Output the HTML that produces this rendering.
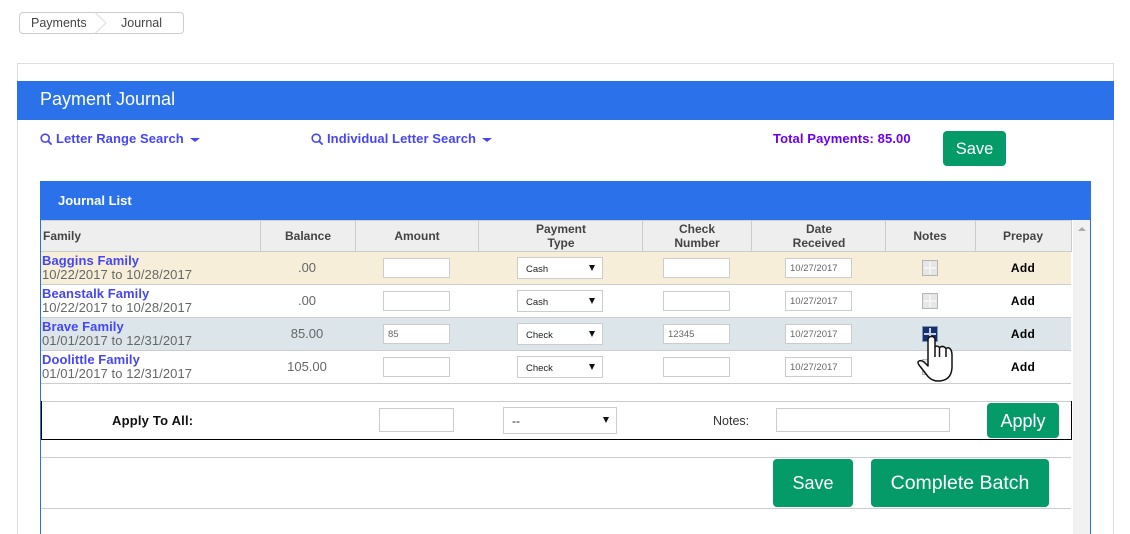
<!DOCTYPE html>
<html><head><meta charset="utf-8"><style>
html,body{margin:0;padding:0;background:#fff;width:1130px;height:534px;overflow:hidden}
body{position:relative;font-family:"Liberation Sans",sans-serif}
.a,.t{position:absolute}
.t{white-space:nowrap;line-height:16px}
.c{transform:translateX(-50%);text-align:center}
.h{font-size:12px;font-weight:bold;color:#444;line-height:14px}
.n{font-size:13px;font-weight:bold;color:#4646f5;letter-spacing:.07px}
.d{font-size:13px;color:#666;letter-spacing:.08px}
.b{font-size:13px;color:#666}
.add{font-size:12px;font-weight:bold;color:#000;letter-spacing:.3px}
.i{position:absolute;box-sizing:border-box;border:1px solid #ccc;background:#fff;font-size:9.5px;color:#666;line-height:20px;padding-left:4px}
.s{position:absolute;box-sizing:border-box;border:1px solid #ccc;background:#fff;font-size:9.5px;color:#222;line-height:24px;padding-left:8px;width:86px;height:22px}
.s:after{content:"";position:absolute;right:7px;top:7px;border:3.5px solid transparent;border-top:6px solid #111;border-bottom:0}
.s.w:after{right:7px;top:9px}
.btn{position:absolute;background:#059b68;border-radius:4px;color:#fff;text-align:center;font-size:18px}
.pl{position:absolute;width:16px;height:16px;box-sizing:border-box;border:1px solid #b5b5b5;background:#e6e6e6}
.pl:before{content:"";position:absolute;left:1px;right:1px;top:6px;height:2px;background:#f4f4f4}
.pl:after{content:"";position:absolute;top:1px;bottom:1px;left:6px;width:2px;background:#f4f4f4}
.pl.on{background:#14306e;border-color:#8a94a8}
.pl.on:before,.pl.on:after{background:#c6d0e0}
</style></head><body>

<div class="a" style="left:19px;top:12px;width:165px;height:22px;box-sizing:border-box;border:1px solid #ccc;border-radius:4px"></div>
<svg class="a" style="left:94px;top:12px" width="14" height="22"><path d="M1 0.5 L12 11 L1 21.5" fill="none" stroke="#ddd"/></svg>
<div class="t" style="left:31px;top:15px;font-size:12.500px;color:#444">Payments</div>
<div class="t" style="left:121px;top:15px;font-size:12.500px;color:#444">Journal</div>

<div class="a" style="left:17px;top:63px;width:1097px;height:471px;box-sizing:border-box;border:1px solid #ddd;border-bottom:0"></div>
<div class="a" style="left:17px;top:81px;width:1097px;height:39px;background:#2b72ea"></div>
<div class="t" style="left:40px;top:89px;font-size:18px;line-height:20px;color:#fff">Payment Journal</div>

<svg class="a" style="left:40px;top:133px" width="13" height="13"><circle cx="5.200" cy="5.200" r="4" fill="none" stroke="#4646f5" stroke-width="1.600"/><path d="M8 8 L11.600 11.600" stroke="#4646f5" stroke-width="1.800"/></svg>
<div class="t n" style="left:56px;top:131px">Letter Range Search</div>
<div class="a" style="left:190px;top:138px;border:5px solid transparent;border-top:4px solid #4646f5;border-bottom:0"></div>
<svg class="a" style="left:311px;top:133px" width="13" height="13"><circle cx="5.200" cy="5.200" r="4" fill="none" stroke="#4646f5" stroke-width="1.600"/><path d="M8 8 L11.600 11.600" stroke="#4646f5" stroke-width="1.800"/></svg>
<div class="t n" style="left:327px;top:131px">Individual Letter Search</div>
<div class="a" style="left:482px;top:138px;border:5px solid transparent;border-top:4px solid #4646f5;border-bottom:0"></div>
<div class="t" style="left:773px;top:131px;font-size:13px;font-weight:bold;color:#6a00f0;letter-spacing:.1px">Total Payments: 85.00</div>
<div class="btn" style="left:943px;top:131px;width:63px;height:35px;line-height:37px;font-size:16.500px">Save</div>

<div class="a" style="left:40px;top:181px;width:1051px;height:353px;box-sizing:border-box;border:1px solid #2b72c8;border-width:0 1px"></div>
<div class="a" style="left:40px;top:181px;width:1051px;height:39px;background:#2b72ea"></div>
<div class="t" style="left:58px;top:193px;font-size:13px;font-weight:bold;color:#fff">Journal List</div>

<div class="a" style="left:1073px;top:220px;width:17px;height:314px;background:#f1f1f1"></div>
<div class="a" style="left:1078px;top:227px;border:4px solid transparent;border-bottom:4px solid #aaa;border-top:0"></div>

<div class="a" style="left:41px;top:220px;width:1031px;height:31px;background:#eee;border-top:1px solid #d0d0d0;box-sizing:border-box"></div>
<div class="a" style="left:41px;top:251px;width:1031px;height:1px;background:#ccc"></div>
<div class="a" style="left:260px;top:220px;width:1px;height:31px;background:#ccc"></div>
<div class="a" style="left:355px;top:220px;width:1px;height:31px;background:#ccc"></div>
<div class="a" style="left:478px;top:220px;width:1px;height:31px;background:#ccc"></div>
<div class="a" style="left:642px;top:220px;width:1px;height:31px;background:#ccc"></div>
<div class="a" style="left:751px;top:220px;width:1px;height:31px;background:#ccc"></div>
<div class="a" style="left:885px;top:220px;width:1px;height:31px;background:#ccc"></div>
<div class="a" style="left:975px;top:220px;width:1px;height:31px;background:#ccc"></div>
<div class="a" style="left:1071px;top:220px;width:1px;height:31px;background:#ccc"></div>

<div class="t h" style="left:43px;top:229px">Family</div>
<div class="t h c" style="left:308px;top:229px">Balance</div>
<div class="t h c" style="left:417px;top:229px">Amount</div>
<div class="t h c" style="left:561px;top:222px">Payment<br>Type</div>
<div class="t h c" style="left:697px;top:222px">Check<br>Number</div>
<div class="t h c" style="left:819px;top:222px">Date<br>Received</div>
<div class="t h c" style="left:930px;top:229px">Notes</div>
<div class="t h c" style="left:1023px;top:229px">Prepay</div>

<div class="a" style="left:41px;top:252px;width:1030px;height:32px;background:#f6eed9"></div>
<div class="a" style="left:41px;top:318px;width:1030px;height:32px;background:#dce6ea"></div>
<div class="a" style="left:41px;top:284px;width:1030px;height:1px;background:#ccc"></div>
<div class="a" style="left:41px;top:317px;width:1030px;height:1px;background:#ccc"></div>
<div class="a" style="left:41px;top:350px;width:1030px;height:1px;background:#ccc"></div>
<div class="a" style="left:41px;top:383px;width:1030px;height:1px;background:#ccc"></div>

<div class="t n" style="left:42px;top:253px">Baggins Family</div>
<div class="t d" style="left:42px;top:267px">10/22/2017 to 10/28/2017</div>
<div class="t b c" style="left:307px;top:260px">.00</div>
<div class="i" style="left:383px;top:258px;width:67px;height:20px"></div>
<div class="s" style="left:517px;top:257px">Cash</div>
<div class="i" style="left:663px;top:258px;width:67px;height:20px"></div>
<div class="i" style="left:785px;top:258px;width:67px;height:20px">10/27/2017</div>
<div class="pl" style="left:922px;top:260px"></div>
<div class="t add c" style="left:1023px;top:260px">Add</div>

<div class="t n" style="left:42px;top:286px">Beanstalk Family</div>
<div class="t d" style="left:42px;top:300px">10/22/2017 to 10/28/2017</div>
<div class="t b c" style="left:307px;top:293px">.00</div>
<div class="i" style="left:383px;top:291px;width:67px;height:20px"></div>
<div class="s" style="left:517px;top:290px">Cash</div>
<div class="i" style="left:663px;top:291px;width:67px;height:20px"></div>
<div class="i" style="left:785px;top:291px;width:67px;height:20px">10/27/2017</div>
<div class="pl" style="left:922px;top:293px"></div>
<div class="t add c" style="left:1023px;top:293px">Add</div>

<div class="t n" style="left:42px;top:319px">Brave Family</div>
<div class="t d" style="left:42px;top:333px">01/01/2017 to 12/31/2017</div>
<div class="t b c" style="left:307px;top:326px">85.00</div>
<div class="i" style="left:383px;top:324px;width:67px;height:20px">85</div>
<div class="s" style="left:517px;top:323px">Check</div>
<div class="i" style="left:663px;top:324px;width:67px;height:20px">12345</div>
<div class="i" style="left:785px;top:324px;width:67px;height:20px">10/27/2017</div>
<div class="pl on" style="left:922px;top:326px"></div>
<div class="t add c" style="left:1023px;top:326px">Add</div>

<div class="t n" style="left:42px;top:352px">Doolittle Family</div>
<div class="t d" style="left:42px;top:366px">01/01/2017 to 12/31/2017</div>
<div class="t b c" style="left:307px;top:359px">105.00</div>
<div class="i" style="left:383px;top:357px;width:67px;height:20px"></div>
<div class="s" style="left:517px;top:356px">Check</div>
<div class="i" style="left:663px;top:357px;width:67px;height:20px"></div>
<div class="i" style="left:785px;top:357px;width:67px;height:20px">10/27/2017</div>
<div class="pl" style="left:922px;top:359px"></div>
<div class="t add c" style="left:1023px;top:359px">Add</div>

<svg class="a" style="left:0;top:0" width="1130" height="534">
<path d="M928 359 L928 340 Q928 336.500 931.500 336.500 Q935 336.500 935 340 L935 347 Q937 345 939.500 347.500 Q943 345 946 348.500 Q949 346.500 951 350 Q952 352 952 355 L952 368 Q951 381 938 381 Q932 381 928 376.500 L919 365 Q917 362 919 361 Q921 360 924 362 L928 366 Z" fill="#fff" stroke="#111" stroke-width="1.500" stroke-linejoin="round"/>
<path d="M935 347 L935 357 M939.500 347.500 L939.500 357 M946 348.500 L946 357" fill="none" stroke="#111" stroke-width="1.500"/>
</svg>

<div class="a" style="left:41px;top:401px;width:1031px;height:1px;background:#ccc"></div>
<div class="a" style="left:41px;top:439px;width:1031px;height:1px;background:#000"></div>
<div class="a" style="left:41px;top:401px;width:1px;height:38px;background:#000"></div>
<div class="a" style="left:1071px;top:401px;width:1px;height:38px;background:#000"></div>
<div class="t" style="left:112px;top:413px;font-size:13px;font-weight:bold;color:#111;letter-spacing:.2px">Apply To All:</div>
<div class="i" style="left:379px;top:408px;width:75px;height:24px"></div>
<div class="s w" style="left:503px;top:407px;width:114px;height:27px;line-height:27px;font-size:12px">--</div>
<div class="t" style="left:713px;top:413px;font-size:12.500px;color:#333">Notes:</div>
<div class="i" style="left:776px;top:408px;width:174px;height:24px"></div>
<div class="btn" style="left:987px;top:403px;width:72px;height:35px;line-height:37px">Apply</div>

<div class="a" style="left:41px;top:457px;width:1030px;height:1px;background:#ccc"></div>
<div class="a" style="left:41px;top:508px;width:1030px;height:1px;background:#ccc"></div>
<div class="btn" style="left:773px;top:459px;width:80px;height:48px;line-height:48px;font-size:18px">Save</div>
<div class="btn" style="left:871px;top:459px;width:178px;height:48px;line-height:48px;font-size:19.500px">Complete Batch</div>

</body></html>
